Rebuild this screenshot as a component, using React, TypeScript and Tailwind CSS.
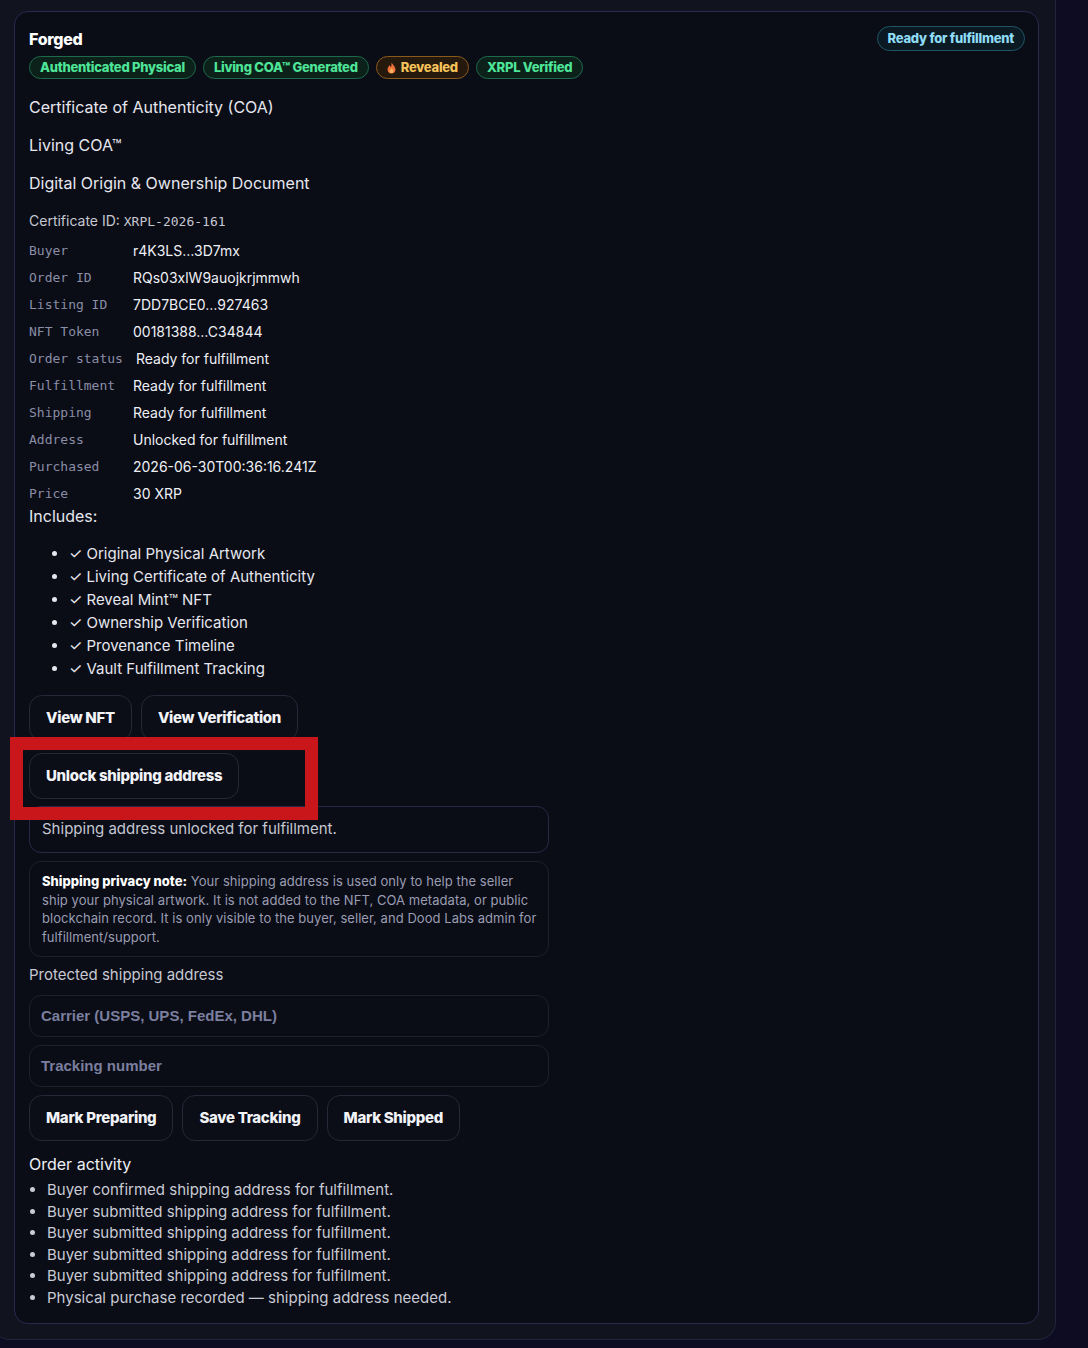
import React from "react";

const font = { fontFamily: "Inter, 'Noto Sans', sans-serif" };

function Badge({ children, tone }: { children: React.ReactNode; tone: "green" | "amber" | "cyan" }) {
  const cls =
    tone === "green"
      ? "border-[#1d6b4c] bg-[#0c2119] text-[#4ee598]"
      : tone === "amber"
      ? "border-[#8a5a1c] bg-[#24190c] text-[#f6c35a]"
      : "border-[#1f5566] bg-[#0b1a22] text-[#8fdcf6]";
  return (
    <span
      className={`inline-flex items-center gap-[5px] rounded-full border px-[10px] text-[13px] font-extrabold tracking-[-0.25px] ${cls}`}
    >
      {children}
    </span>
  );
}

function Btn({ children }: { children: React.ReactNode }) {
  return (
    <button className="h-[46px] rounded-[13px] border border-[#262838] bg-[#0b0d17] px-4 text-[15px] font-extrabold tracking-[-0.3px] text-[#f2f3f7]">
      {children}
    </button>
  );
}

const rows: [string, string][] = [
  ["Buyer", "r4K3LS…3D7mx"],
  ["Order ID", "RQs03xlW9auojkrjmmwh"],
  ["Listing ID", "7DD7BCE0…927463"],
  ["NFT Token", "00181388…C34844"],
  ["Order status", "Ready for fulfillment"],
  ["Fulfillment", "Ready for fulfillment"],
  ["Shipping", "Ready for fulfillment"],
  ["Address", "Unlocked for fulfillment"],
  ["Purchased", "2026-06-30T00:36:16.241Z"],
  ["Price", "30 XRP"],
];

const includes = [
  "Original Physical Artwork",
  "Living Certificate of Authenticity",
  "Reveal Mint™ NFT",
  "Ownership Verification",
  "Provenance Timeline",
  "Vault Fulfillment Tracking",
];

const activity = [
  "Buyer confirmed shipping address for fulfillment.",
  "Buyer submitted shipping address for fulfillment.",
  "Buyer submitted shipping address for fulfillment.",
  "Buyer submitted shipping address for fulfillment.",
  "Buyer submitted shipping address for fulfillment.",
  "Physical purchase recorded — shipping address needed.",
];

function Flame() {
  return (
    <svg width="9" height="12" viewBox="0 0 9 12">
      <path d="M4.5 0.5 C5.5 2.5 8.5 4.5 8.5 7.5 C8.5 10 6.7 11.5 4.5 11.5 C2.3 11.5 0.5 10 0.5 7.5 C0.5 5.5 2 4.5 2.5 3 C3 4.2 3.5 4.8 4 5 C4.5 3.5 4.6 2 4.5 0.5 Z" fill="#f0703a" />
      <path d="M4.5 6 C5.5 7.2 6.5 8 6.5 9.3 C6.5 10.5 5.6 11.2 4.5 11.2 C3.4 11.2 2.5 10.5 2.5 9.3 C2.5 8.2 3.8 7.5 4.5 6 Z" fill="#f7b25a" />
    </svg>
  );
}

export default function App() {
  return (
    <div className="min-h-[1348px] w-[1088px] overflow-hidden bg-[#0e0c22]" style={font}>
      <div className="-ml-2 w-[1064px] rounded-b-[18px] border-r border-b border-[#23253a] bg-[#11131f] pt-[11px] pb-[15px] pl-[22px] pr-[16px]">
        <div className="relative rounded-[14px] border border-[#2a2950] bg-[#0a0c16] px-[14px] pt-[16px] pb-[14px] text-[#e9eaf0]">
          {/* header */}
          <div className="flex items-start justify-between">
            <div className="text-[16px] font-extrabold tracking-[-0.3px] text-white leading-[22px]">Forged</div>
            <div className="mr-[-1px] mt-[-2px] flex h-[25px]">
              <Badge tone="cyan">Ready for fulfillment</Badge>
            </div>
          </div>
          <div className="mt-[5px] flex h-[23px] gap-[7px]">
            <Badge tone="green">Authenticated Physical</Badge>
            <Badge tone="green">Living COA™ Generated</Badge>
            <Badge tone="amber">
              <Flame />
              Revealed
            </Badge>
            <Badge tone="green">XRPL Verified</Badge>
          </div>

          <div className="mt-[16px] text-[16px] leading-[24px] text-[#e6e7ee]">Certificate of Authenticity (COA)</div>
          <div className="mt-[14px] text-[16px] leading-[24px] text-[#e6e7ee]">Living COA™</div>
          <div className="mt-[14px] text-[16px] leading-[24px] text-[#e6e7ee]">Digital Origin &amp; Ownership Document</div>
          <div className="mt-[14px] text-[14px] leading-[24px] text-[#c6c8d2]">
            Certificate ID: <span className="text-[13px] text-[#c6c8d2]" style={{ fontFamily: "'DejaVu Sans Mono', monospace" }}>XRPL-2026-161</span>
          </div>

          <div className="mt-[3px] flex flex-col">
            {rows.map(([k, v]) => (
              <div key={k} className="flex h-[27px] items-center">
                <span
                  className="inline-block min-w-[104px] pr-[13px] text-[13px] text-[#8a8ea6]"
                  style={{ fontFamily: "'DejaVu Sans Mono', monospace" }}
                >
                  {k}
                </span>
                <span className="text-[14px] text-[#eef0f5]">{v}</span>
              </div>
            ))}
          </div>

          <div className="mt-[-3px] text-[16px] leading-[24px] text-[#e6e7ee]">Includes:</div>
          <ul className="mt-[14px] list-disc pl-[40px] text-[15px] leading-[23px] text-[#e6e7ee]">
            {includes.map((t) => (
              <li key={t}>✓ {t}</li>
            ))}
          </ul>

          <div className="mt-[15px] flex gap-[9px]">
            <Btn>View NFT</Btn>
            <Btn>View Verification</Btn>
          </div>
          <div className="mt-[12px] flex">
            <Btn>Unlock shipping address</Btn>
          </div>

          <div className="mt-[7px] flex h-[47px] w-[520px] items-center rounded-[12px] border border-[#272848] px-[12px] text-[15px] text-[#c5c7d1]">
            Shipping address unlocked for fulfillment.
          </div>

          <div className="mt-[8px] w-[520px] rounded-[12px] border border-[#1e2030] pl-[12px] pr-[10px] py-[10px] text-[13px] leading-[18.5px] tracking-[0.05px] text-[#9a9db2]">
            <span className="font-extrabold tracking-[0px] text-white">Shipping privacy note:</span> Your shipping address is used only to help the seller ship your physical artwork. It is not added to the NFT, COA metadata, or public blockchain record. It is only visible to the buyer, seller, and Dood Labs admin for fulfillment/support.
          </div>

          <div className="mt-[7px] text-[15px] leading-[22px] text-[#c6c8d2]">Protected shipping address</div>

          <div
            className="mt-[9px] flex h-[42px] w-[520px] items-center rounded-[12px] border border-[#1e2030] px-[11px] text-[15px] font-bold text-[#7b7f9e]"
            style={{ fontFamily: "'Liberation Sans', Arial, sans-serif" }}
          >
            Carrier (USPS, UPS, FedEx, DHL)
          </div>
          <div
            className="mt-[8px] flex h-[42px] w-[520px] items-center rounded-[12px] border border-[#1e2030] px-[11px] text-[15px] font-bold text-[#7b7f9e]"
            style={{ fontFamily: "'Liberation Sans', Arial, sans-serif" }}
          >
            Tracking number
          </div>

          <div className="mt-[8px] flex gap-[9px]">
            <Btn>Mark Preparing</Btn>
            <Btn>Save Tracking</Btn>
            <Btn>Mark Shipped</Btn>
          </div>

          <div className="mt-[11px] text-[16px] leading-[24px] text-[#eef0f5]">Order activity</div>
          <ul className="mt-[3px] list-disc pl-[18px] text-[15px] leading-[21.6px] text-[#c9cbd4] marker:text-[#c9cbd4]">
            {activity.map((t, i) => (
              <li key={i}>{t}</li>
            ))}
          </ul>

          {/* annotation box */}
          <div className="pointer-events-none absolute left-[-5px] top-[725px] h-[83px] w-[308px] border-[13px] border-[#c8161b]" />
        </div>
      </div>
    </div>
  );
}
